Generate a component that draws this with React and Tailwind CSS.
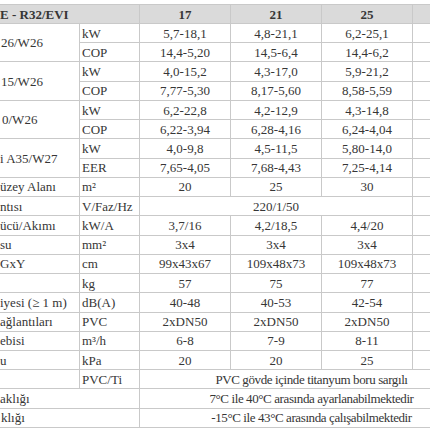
import React from "react";

const C = ({ children, className = "" }) => (
  <div className={"bg-white flex items-center overflow-hidden whitespace-nowrap " + className}>{children}</div>
);
const V = ({ children, className = "" }) => (
  <C className={"justify-center " + className}>{children}</C>
);
const L = ({ children, className = "" }) => (
  <C className={"pl-[2px] " + className}>{children}</C>
);

export default function App() {
  const pairs = [
    ["26/W26", "kW", ["5,7-18,1", "4,8-21,1", "6,2-25,1"], "COP", ["14,4-5,20", "14,5-6,4", "14,4-6,2"], "pl-[1px]"],
    ["15/W26", "kW", ["4,0-15,2", "4,3-17,0", "5,9-21,2"], "COP", ["7,77-5,30", "8,17-5,60", "8,58-5,59"], "pl-[1px]"],
    ["0/W26", "kW", ["6,2-22,8", "4,2-12,9", "4,3-14,8"], "COP", ["6,22-3,94", "6,28-4,16", "6,24-4,04"], "pl-[2px]"],
    ["i A35/W27", "kW", ["4,0-9,8", "4,5-11,5", "5,80-14,0"], "EER", ["7,65-4,05", "7,68-4,43", "7,25-4,14"], "pl-0"],
  ];
  const singles = [
    ["üzey Alanı", "m²", ["20", "25", "30"]],
    ["ntısı", "V/Faz/Hz", "220/1/50"],
    ["ücü/Akımı", "kW/A", ["3,7/16", "4,2/18,5", "4,4/20"]],
    ["su", "mm²", ["3x4", "3x4", "3x4"]],
    ["GxY", "cm", ["99x43x67", "109x48x73", "109x48x73"]],
    ["", "kg", ["57", "75", "77"]],
    ["iyesi (≥ 1 m)", "dB(A)", ["40-48", "40-53", "42-54"]],
    ["ağlantıları", "PVC", ["2xDN50", "2xDN50", "2xDN50"]],
    ["ebisi", "m³/h", ["6-8", "7-9", "8-11"]],
    ["u", "kPa", ["20", "20", "25"]],
  ];
  return (
    <div className="w-[430px] h-[430px] bg-white overflow-hidden pt-[4px] text-[#363636] text-[13px] leading-none" style={{ fontFamily: '"Liberation Serif", "Times New Roman", serif' }}>
      <div className="w-[483px] grid grid-cols-[79px_59px_90px_90px_90px_1fr] grid-rows-[18px_repeat(21,18.24px)] gap-px bg-[#c9c9c9] py-px">
        {/* header */}
        <div className="col-span-2 bg-[#dadada] flex items-center font-bold whitespace-nowrap overflow-hidden">E - R32/EVI</div>
        <div className="bg-[#dadada] flex items-center justify-center font-bold">17</div>
        <div className="bg-[#dadada] flex items-center justify-center font-bold">21</div>
        <div className="bg-[#dadada] flex items-center justify-center font-bold">25</div>
        <div className="bg-[#dadada]" />

        {pairs.map(([label, u1, v1, u2, v2, pad], i) => (
          <React.Fragment key={"p" + i}>
            <C className={"row-span-2 " + pad}>{label}</C>
            <L>{u1}</L>
            {v1.map((v, j) => <V key={j}>{v}</V>)}
            <C />
            <L>{u2}</L>
            {v2.map((v, j) => <V key={j}>{v}</V>)}
            <C />
          </React.Fragment>
        ))}

        {singles.map(([label, unit, vals], i) => (
          <React.Fragment key={"s" + i}>
            <C className="pl-0">{label}</C>
            <L>{unit}</L>
            {Array.isArray(vals) ? (
              vals.map((v, j) => <V key={j}>{v}</V>)
            ) : (
              <V className="col-span-3">{vals}</V>
            )}
            <C />
          </React.Fragment>
        ))}

        <C className="pl-0" />
        <L>PVC/Ti</L>
        <V className="col-span-4 tracking-[-0.4px]">PVC gövde içinde titanyum boru sargılı</V>
        <C className="col-span-2 pl-0">aklığı</C>
        <V className="col-span-4 tracking-[-0.4px]">7°C ile 40°C arasında ayarlanabilmektedir</V>
        <C className="col-span-2 pl-[1px]">klığı</C>
        <V className="col-span-4 tracking-[-0.4px]">-15°C ile 43°C arasında çalışabilmektedir</V>
      </div>
    </div>
  );
}
